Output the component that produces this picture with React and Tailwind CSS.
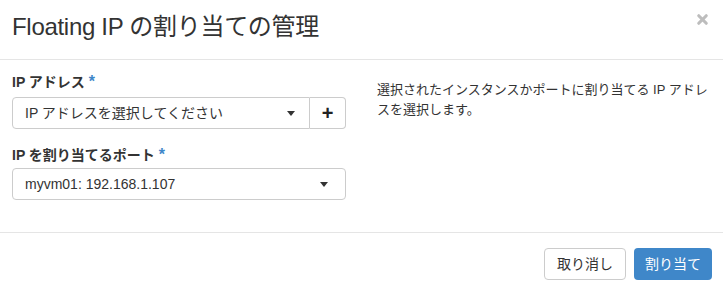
import { X } from "lucide-react";

const font = {
  fontFamily: '"Liberation Sans", "Noto Sans CJK JP", sans-serif',
};

function Caret() {
  return (
    <svg width="8" height="5" viewBox="0 0 8 5" className="shrink-0">
      <path d="M0 0h8L4 5z" fill="#333" />
    </svg>
  );
}

export default function App() {
  return (
    <div
      className="w-[723px] h-[289px] bg-white text-[#333] flex flex-col"
      style={font}
    >
      {/* Header */}
      <div className="h-[60px] flex items-start justify-between border-b border-[#e5e5e5] pl-3 pr-[12px]">
        <h4 className="text-[24px] leading-none mt-[15px] text-[#333] tracking-[-0.3px]">
          Floating IP の割り当ての管理
        </h4>
        <button className="mt-[12px] mr-[1px] text-[#bdbdbd]">
          <X className="w-[15px] h-[15px]" strokeWidth={5} />
        </button>
      </div>

      {/* Body */}
      <div className="flex-1 flex pl-3 pr-[4px] pt-[12px] gap-[31px]">
        <div className="w-[334px] shrink-0">
          <label className="block text-[14px] font-bold leading-5 mb-[5px]">
            IP アドレス <span className="text-[#3f87c9] text-[16px]">*</span>
          </label>
          <div className="flex h-[32px]">
            <div className="flex-1 flex items-center justify-between border border-[#ccc] rounded-l-[4px] pl-3 pr-[14px] text-[14px]">
              <span>IP アドレスを選択してください</span>
              <Caret />
            </div>
            <button className="w-[36px] flex items-center justify-center border border-l-0 border-[#ccc] rounded-r-[4px] text-[#222] text-[20px] font-bold leading-none">
              +
            </button>
          </div>
          <label className="block text-[14px] font-bold leading-5 mt-[16px] mb-[3px]">
            IP を割り当てるポート <span className="text-[#3f87c9] text-[16px]">*</span>
          </label>
          <div className="h-[32px] flex items-center justify-between border border-[#ccc] rounded-[4px] pl-3 pr-[17px] text-[14px]">
            <span>myvm01: 192.168.1.107</span>
            <Caret />
          </div>
        </div>
        <p className="flex-1 text-[13px] leading-[20px] pt-[8px] pr-[4px]">
          選択されたインスタンスかポートに割り当てる IP アドレスを選択します。
        </p>
      </div>

      {/* Footer */}
      <div className="h-[57px] border-t border-[#e5e5e5] flex justify-end items-start gap-[8px] pt-[15px] pr-[11px]">
        <button className="h-[32px] px-[12px] border border-[#ccc] rounded-[4px] text-[14px] text-[#333] bg-white">
          取り消し
        </button>
        <button className="h-[32px] w-[78px] rounded-[4px] text-[14px] text-white bg-[#3f87c9]">
          割り当て
        </button>
      </div>
    </div>
  );
}
